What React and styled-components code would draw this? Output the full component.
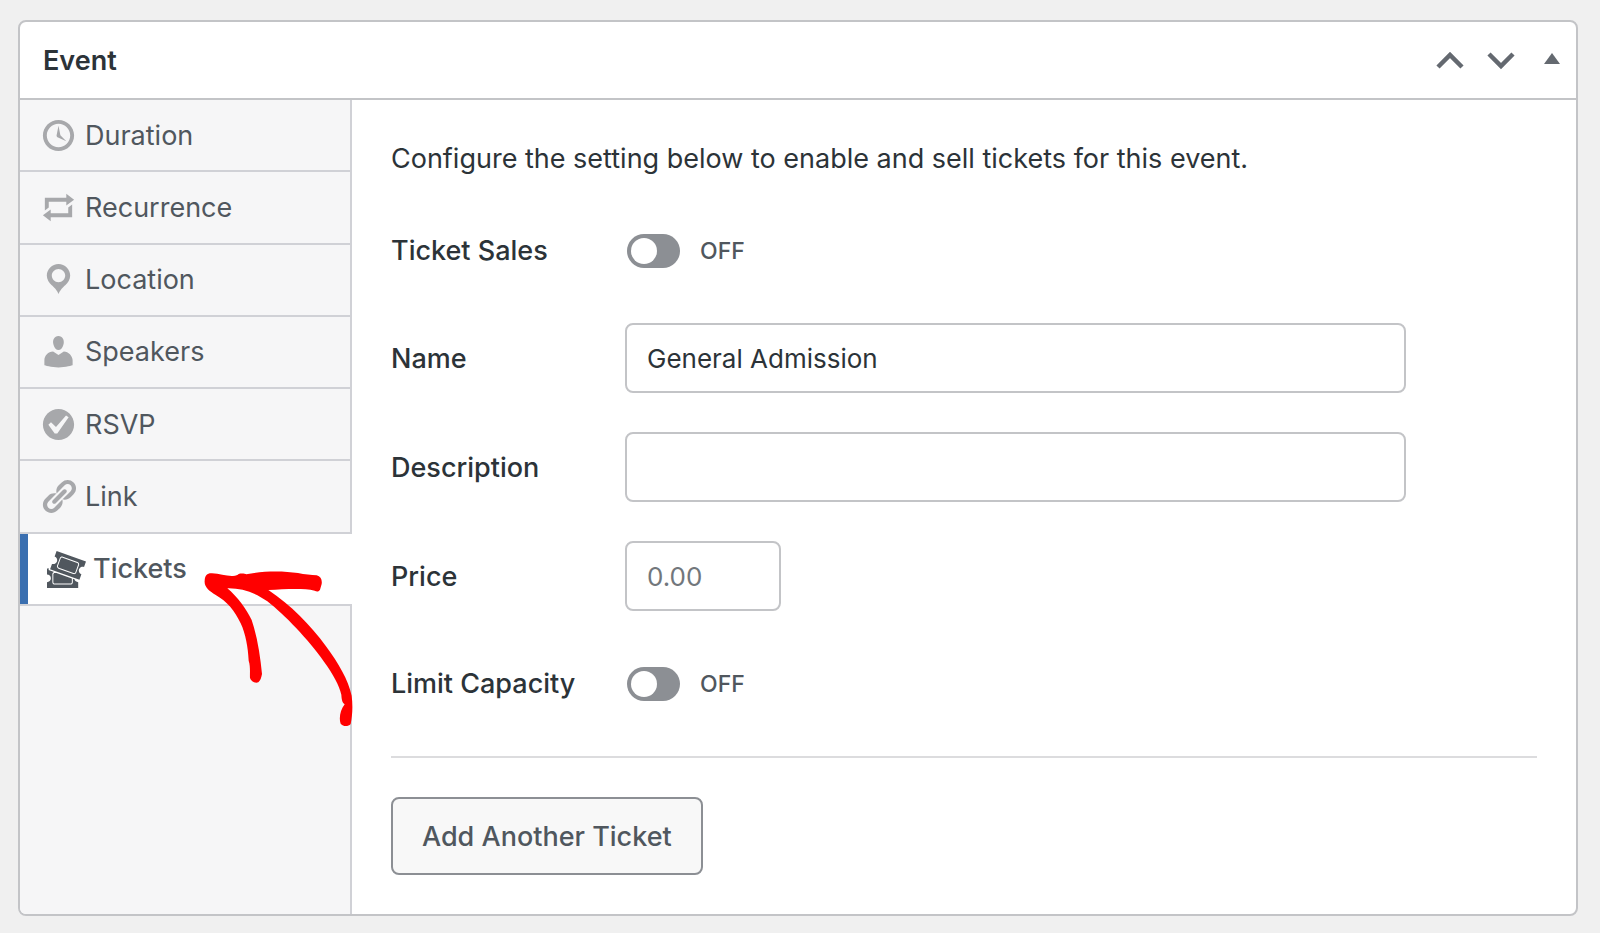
import React, { useState } from "react";
import styled, { createGlobalStyle } from "styled-components";

const GlobalStyle = createGlobalStyle`
  * {
    box-sizing: border-box;
  }
  body {
    margin: 0;
    background: #f0f0f0;
    color: #2c3338;
    font-family: Inter, "Liberation Sans", sans-serif;
    font-size: 27px;
  }
`;

const icons = {
  clock:
    "M10 2c4.42 0 8 3.58 8 8s-3.58 8-8 8-8-3.58-8-8 3.58-8 8-8zm0 14c3.31 0 6-2.69 6-6s-2.69-6-6-6-6 2.69-6 6 2.69 6 6 6zm-.71-5.29c.07.05.14.1.23.15l-.02.02L14 13l-3.03-3.19L10 5l-.97 4.81h.01c0 .02-.01.05-.02.09S9 9.97 9 10c0 .28.1.52.29.71z",
  repeat:
    "M5 7v3l-2 1.5V5h11V3l4 3.01L14 9V7H5zm10 6v-3l2-1.5V15H6v2l-4-3.01L6 11v2h9z",
  pin:
    "M10 2C6.69 2 4 4.69 4 8c0 2.02 1.17 3.71 2.53 4.89.43.37 1.18.96 1.85 1.83.74.97 1.41 2.01 1.62 2.71.21-.7.88-1.74 1.62-2.71.67-.87 1.42-1.46 1.85-1.83C14.83 11.71 16 10.02 16 8c0-3.31-2.69-6-6-6zm0 2.56c1.9 0 3.44 1.54 3.44 3.44S11.9 11.44 10 11.44 6.56 9.9 6.56 8 8.1 4.56 10 4.56z",
  user:
    "M10 9.25c-2.27 0-2.73-3.44-2.73-3.44C7 4.02 7.82 2 9.97 2c2.16 0 2.98 2.02 2.71 3.81 0 0-.41 3.44-2.68 3.44zm0 2.57L12.72 10c2.39 0 4.52 2.33 4.52 4.53v2.49s-3.65 1.13-7.24 1.13c-3.65 0-7.24-1.13-7.24-1.13v-2.49c0-2.25 1.94-4.48 4.47-4.48z",
  check:
    "M10 2c-4.42 0-8 3.58-8 8s3.58 8 8 8 8-3.58 8-8-3.58-8-8-8zm-.615 12.66h-1.34l-3.24-4.54 1.341-1.25 2.569 2.4 5.141-5.931 1.34.94-5.811 8.381z",
  link:
    "M17.74 2.76c1.68 1.69 1.68 4.41 0 6.1l-1.53 1.52c-1.12 1.12-2.7 1.47-4.14 1.09l2.62-2.61.76-.77.76-.76c.84-.84.84-2.2 0-3.04-.84-.85-2.2-.85-3.04 0l-.77.76-3.38 3.38c-.37-1.44-.02-3.02 1.1-4.14l1.52-1.53c1.69-1.68 4.42-1.68 6.1 0zM8.59 13.43l5.34-5.34c.42-.42.42-1.1 0-1.52-.44-.43-1.13-.39-1.53 0l-5.33 5.34c-.42.42-.42 1.1 0 1.52.44.43 1.13.39 1.52 0zm-.76 2.29l4.14-4.15c.38 1.44.03 3.02-1.09 4.14l-1.52 1.53c-1.69 1.68-4.41 1.68-6.1 0-1.68-1.68-1.68-4.42 0-6.1l1.53-1.52c1.12-1.12 2.7-1.47 4.14-1.1l-4.14 4.15c-.85.84-.85 2.2 0 3.05.84.84 2.2.84 3.04 0z",
  tickets:
    "M20 6.38L18.99 9.2v-.01c-.52-.19-1.03-.16-1.53.08s-.85.62-1.04 1.14-.16 1.03.07 1.53c.24.5.62.84 1.15 1.03v.01l-1.01 2.82-15.06-5.38.99-2.79c.52.19 1.03.16 1.53-.08.5-.23.84-.61 1.03-1.13s.16-1.03-.08-1.53c-.23-.49-.61-.83-1.13-1.02L4.93 1zm-4.97 5.69l1.37-3.76c.12-.31.1-.65-.04-.95s-.39-.53-.7-.65L8.14 3.98c-.64-.23-1.37.12-1.6.74L5.17 8.48c-.24.65.1 1.37.74 1.6l7.52 2.74c.14.05.28.08.43.08.52 0 1-.33 1.17-.83zM7.97 4.45l7.51 2.73c.19.07.34.21.43.39.08.18.09.38.02.57l-1.37 3.76c-.13.38-.58.59-.96.45L6.09 9.61c-.39-.14-.59-.57-.45-.96l1.37-3.76c.1-.29.39-.49.7-.49.09 0 .17.02.26.05zm6.82 12.14c.35.27.75.41 1.2.41H16v3H0v-2.96c.55 0 1.03-.2 1.41-.59.39-.38.59-.86.59-1.41s-.2-1.02-.59-1.41-.86-.59-1.41-.59V10h1.05l-.28.8 2.87 1.02c-.51.16-.89.62-.89 1.18v4c0 .69.56 1.25 1.25 1.25h8c.69 0 1.25-.56 1.25-1.25v-1.75l.83.3c.12.43.36.78.71 1.04zM3.25 17v-4c0-.41.34-.75.75-.75h.83l7.92 2.83V17c0 .41-.34.75-.75.75H4c-.41 0-.75-.34-.75-.75z",
};

const tabs = [
  { label: "Duration", icon: "clock" },
  { label: "Recurrence", icon: "repeat" },
  { label: "Location", icon: "pin" },
  { label: "Speakers", icon: "user" },
  { label: "RSVP", icon: "check" },
  { label: "Link", icon: "link" },
  { label: "Tickets", icon: "tickets", active: true },
];

function ToggleField({ id, label }) {
  const [on, setOn] = useState(false);
  return (
    <Field $toggle>
      <Label htmlFor={id}>{label}</Label>
      <Switch
        id={id}
        type="checkbox"
        checked={on}
        onChange={(e) => setOn(e.target.checked)}
      />
      <State>{on ? "ON" : "OFF"}</State>
    </Field>
  );
}

function App() {
  return (
    <>
      <GlobalStyle />
      <Page>
        <MetaBox>
          <Header>
            <Title>Event</Title>
            <Actions>
              <ActionButton type="button" aria-label="Move up">
                <svg width="28" height="20" viewBox="0 0 28 20">
                  <path d="M1 17L13 5l12 12" fill="none" stroke="currentColor" strokeWidth="4.5" />
                </svg>
              </ActionButton>
              <ActionButton type="button" aria-label="Move down">
                <svg width="28" height="20" viewBox="0 0 28 20">
                  <path d="M2 4l12 12L26 4" fill="none" stroke="currentColor" strokeWidth="4.5" />
                </svg>
              </ActionButton>
              <ActionButton type="button" aria-label="Toggle panel">
                <svg width="16" height="20" viewBox="0 0 16 20">
                  <path d="M9 3l8 11H1z" fill="currentColor" />
                </svg>
              </ActionButton>
            </Actions>
          </Header>
          <Body>
            <Sidebar>
              <TabList>
                {tabs.map((tab) => (
                  <Tab key={tab.label} $active={tab.active}>
                    <TabLink href="#" $active={tab.active}>
                      <TabIcon viewBox="0 0 20 20" $active={tab.active}>
                        <path d={icons[tab.icon]} />
                      </TabIcon>
                      {tab.label}
                    </TabLink>
                    {tab.active && (
                      <Arrow viewBox="25 25 456 480">
                        <path d="M30 60C31 44 38 37 52 38C75 39 95 47 115 46C124 45 129 44 132 40C138 38 150 38 155 41C205 30 265 30 310 37C330 41 350 43 366 44C378 47 383 58 381 70L376 87C372 94 366 93 360 90C325 82 270 86 221 88C290 135 345 190 395 258C430 305 461 357 471 405C475 438 473 465 468 490C461 498 446 499 438 489C432 472 437 448 450 431C442 425 441 416 440 402C434 375 415 340 388 303C340 235 270 163 218 122C180 95 140 82 98 83C128 108 155 145 171 178C187 225 197 285 202 340C200 351 197 360 191 365C181 369 169 362 166 352C165 340 168 318 162 300C160 260 153 220 138 188C120 150 98 122 62 102C45 91 28 80 30 60Z" />
                      </Arrow>
                    )}
                  </Tab>
                ))}
              </TabList>
            </Sidebar>
            <Content>
              <Intro>
                Configure the setting below to enable and sell tickets for this
                event.
              </Intro>
              <ToggleField id="ticket-sales" label="Ticket Sales" />
              <Field>
                <Label htmlFor="ticket-name">Name</Label>
                <TextInput id="ticket-name" type="text" defaultValue="General Admission" />
              </Field>
              <Field>
                <Label htmlFor="ticket-description">Description</Label>
                <TextInput id="ticket-description" type="text" />
              </Field>
              <Field>
                <Label htmlFor="ticket-price">Price</Label>
                <TextInput id="ticket-price" type="text" placeholder="0.00" $small />
              </Field>
              <ToggleField id="limit-capacity" label="Limit Capacity" />
              <Divider />
              <AddButton type="button">Add Another Ticket</AddButton>
            </Content>
          </Body>
        </MetaBox>
      </Page>
    </>
  );
}

const Page = styled.main`
  padding: 20px 22px 16px 18px;
`;

const MetaBox = styled.section`
  background: #fff;
  border: 2px solid #c3c4c7;
  border-radius: 8px;
  overflow: hidden;
`;

const Header = styled.header`
  display: flex;
  align-items: center;
  justify-content: space-between;
  height: 78px;
  padding-left: 23px;
  border-bottom: 2px solid #c3c4c7;
`;

const Title = styled.h2`
  margin: 0;
  font-size: 27px;
  font-weight: 600;
`;

const Actions = styled.div`
  display: flex;
`;

const ActionButton = styled.button`
  display: flex;
  align-items: center;
  justify-content: center;
  width: 50px;
  height: 50px;
  padding: 0;
  border: 0;
  background: none;
  color: #646970;
  cursor: pointer;
  svg {
    overflow: visible;
  }
`;

const Body = styled.div`
  display: flex;
`;

const Sidebar = styled.nav`
  flex: 0 0 332px;
  background: #f6f6f7;
  border-right: 2px solid #d0d1d6;
`;

const TabList = styled.ul`
  display: grid;
  grid-auto-rows: 1fr;
  min-height: 506px;
  margin: 0;
  padding: 0;
  list-style: none;
`;

const Tab = styled.li`
  position: relative;
  border-bottom: 2px solid #d0d1d6;
  ${({ $active }) =>
    $active &&
    `
      margin-right: -2px;
      background: #fff;
  `}
`;

const TabLink = styled.a`
  display: flex;
  align-items: center;
  gap: 7px;
  height: 100%;
  padding-left: 19px;
  border-left: ${({ $active }) => ($active ? "8px solid #3a6fb0" : "0")};
  color: #50575e;
  font-weight: ${({ $active }) => ($active ? 500 : 400)};
  text-decoration: none;
`;

const TabIcon = styled.svg`
  width: 39px;
  height: 39px;
  fill: ${({ $active }) => ($active ? "#50575e" : "#a7a8ab")};
`;

const Arrow = styled.svg`
  position: absolute;
  z-index: 1;
  top: 35px;
  left: 183px;
  width: 152px;
  height: 160px;
  fill: #f00;
  pointer-events: none;
`;

const Content = styled.div`
  display: flex;
  flex: 1;
  flex-direction: column;
  align-items: stretch;
  gap: 39px;
  min-width: 0;
  padding: 39px;
`;

const Intro = styled.p`
  margin: 0;
  line-height: 39px;
`;

const Field = styled.div`
  display: flex;
  align-items: center;
  height: ${({ $toggle }) => ($toggle ? "67px" : "70px")};
`;

const Label = styled.label`
  flex: 0 0 234px;
  font-weight: 500;
`;

const TextInput = styled.input`
  flex: 0 1 ${({ $small }) => ($small ? "156px" : "781px")};
  min-width: 0;
  height: 70px;
  padding: 0 20px;
  border: 2px solid #c3c4c7;
  border-radius: 8px;
  background: #fff;
  color: #2c3338;
  font: inherit;
  font-size: 26px;
  &::placeholder {
    color: #72777c;
  }
`;

const Switch = styled.input`
  appearance: none;
  display: flex;
  align-items: center;
  width: 53px;
  height: 34px;
  margin: 0 20px 0 2px;
  padding: 4px;
  border-radius: 17px;
  background: #8c8f94;
  cursor: pointer;
  &::before {
    content: "";
    width: 26px;
    height: 26px;
    border-radius: 50%;
    background: #fff;
  }
  &:checked {
    justify-content: flex-end;
    background: #2271b1;
  }
`;

const State = styled.span`
  color: #50575e;
  font-size: 23px;
  font-weight: 500;
`;

const Divider = styled.hr`
  width: 100%;
  height: 2px;
  margin: 0;
  border: 0;
  background: #dcdcde;
`;

const AddButton = styled.button`
  align-self: flex-start;
  height: 78px;
  padding: 0 29px;
  border: 2px solid #8c8f94;
  border-radius: 8px;
  background: #f8f8f8;
  color: #50575e;
  font: inherit;
  font-weight: 500;
  cursor: pointer;
`;

export default App;
